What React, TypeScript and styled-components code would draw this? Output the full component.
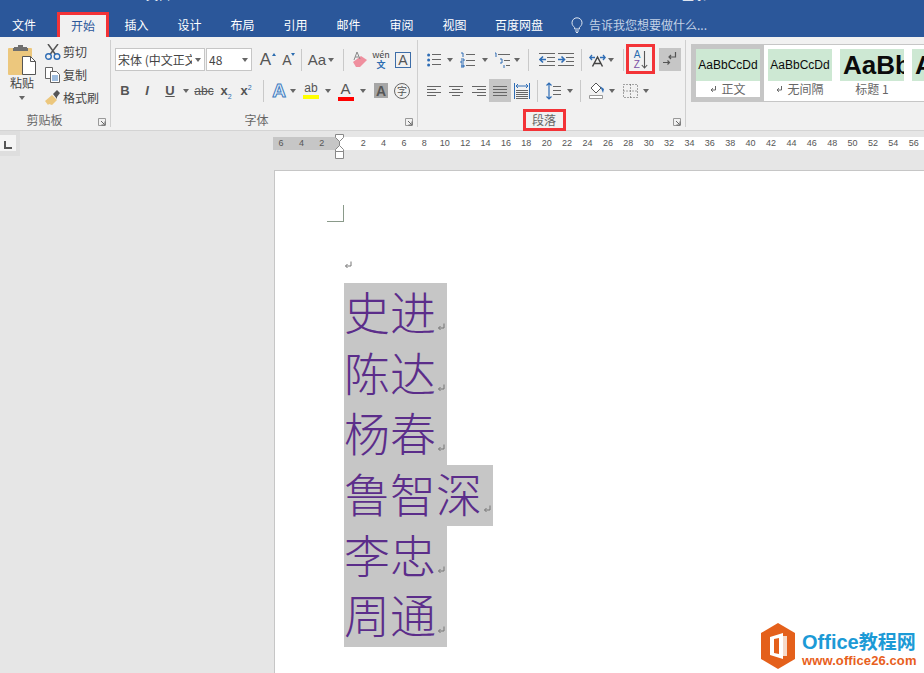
import React from 'react'
import styled, { createGlobalStyle } from 'styled-components'

const Global = createGlobalStyle`
  html, body { margin: 0; padding: 0; background: #e6e6e6; overflow: hidden; }
  * { box-sizing: border-box; }
`

const UI = `"Noto Sans CJK SC", "Liberation Sans", sans-serif`

const Window = styled.div`
  position: relative;
  width: 924px;
  height: 673px;
  overflow: hidden;
  display: flex;
  flex-direction: column;
  font-family: ${UI};
  font-size: 12px;
  color: #444;
`

const TitleBar = styled.div`
  height: 37px;
  flex: none;
  background: #2b579a;
  display: flex;
  flex-direction: column;
`

const TitleSliver = styled.div`
  height: 12px;
  flex: none;
  overflow: hidden;
  display: flex;
  color: #fff;
  font-size: 12px;
  line-height: 12px;
  & > span { margin-top: -11px; height: 12px; }
  & > span:first-child { margin-left: 146px; width: 36px; }
  & > span:last-child { margin-left: 500px; width: 54px; }
`

const Tabs = styled.div`
  height: 25px;
  display: flex;
  align-items: stretch;
`

const Tab = styled.div<{ $active?: boolean; $file?: boolean }>`
  display: flex;
  align-items: center;
  justify-content: center;
  width: ${p => (p.$file ? 57 : p.$active ? 52 : 53)}px;
  padding: ${p => (p.$file ? '0 9px 0 0' : 0)};
  margin-right: ${p => (p.$active ? 1 : 0)}px;
  color: ${p => (p.$active ? '#2b579a' : '#fff')};
  background: ${p => (p.$active ? '#f1f1f1' : 'transparent')};
  border: ${p => (p.$active ? '3px solid #f33337' : 'none')};
  border-bottom: none;
  line-height: 20px;
  white-space: nowrap;
`

const WideTab = styled(Tab)`
  width: 76px;
`

const TellMe = styled.div`
  display: flex;
  align-items: center;
  gap: 6px;
  margin-left: 14px;
  color: #c3d2e6;
`

const Ribbon = styled.div`
  height: 94px;
  flex: none;
  display: flex;
  background: #f1f1f1;
  border-bottom: 1px solid #d4d4d4;
`

const Group = styled.div<{ $w?: number }>`
  position: relative;
  width: ${p => (p.$w ? `${p.$w}px` : 'auto')};
  flex: ${p => (p.$w ? 'none' : '1')};
  display: flex;
  flex-direction: column;
  &::after {
    content: '';
    display: ${p => (p.$w ? 'block' : 'none')};
    position: absolute;
    right: 0;
    top: 3px;
    bottom: 3px;
    width: 1px;
    background: #cfcfcf;
  }
`

const GroupBody = styled.div<{ $left?: number }>`
  flex: 1;
  padding-left: ${p => p.$left ?? 0}px;
  padding-top: 11px;
  display: flex;
  flex-direction: column;
  gap: 8px;
`

const GroupLabel = styled.div<{ $align?: string; $shift?: number }>`
  position: relative;
  height: 20px;
  flex: none;
  display: flex;
  align-items: center;
  justify-content: ${p => p.$align ?? 'center'};
  padding-right: ${p => p.$shift ?? 0}px;
  color: #666;
  line-height: 20px;
`

const Launcher = styled.svg`
  position: absolute;
  right: 5px;
  top: 8px;
  width: 8px;
  height: 8px;
`

const Row = styled.div`
  height: 23px;
  display: flex;
  align-items: center;
`

const S = styled.div<{ $w: number; $on?: boolean }>`
  position: relative;
  width: ${p => p.$w}px;
  height: 23px;
  flex: none;
  display: flex;
  align-items: center;
  justify-content: center;
  background: ${p => (p.$on ? '#c6c6c6' : 'transparent')};
`

const Caret = styled(S)`
  &::before {
    content: '';
    flex: none;
    border-left: 3.5px solid transparent;
    border-right: 3.5px solid transparent;
    border-top: 4px solid #666;
    margin-top: 1px;
  }
`

const Sep = styled(S)`
  &::before {
    content: '';
    width: 1px;
    height: 22px;
    background: #c9c9c9;
  }
`

const Flag = styled.div<{ $t: number; $l: number; $w: number; $h: number }>`
  position: absolute;
  top: ${p => p.$t}px;
  left: ${p => p.$l}px;
  width: ${p => p.$w}px;
  height: ${p => p.$h}px;
  border: 3px solid #f33337;
  pointer-events: none;
`

/* clipboard */
const Clip = styled.div`
  flex: 1;
  display: flex;
`

const PasteCol = styled.div`
  width: 32px;
  margin-left: 6px;
  padding-top: 8px;
  display: flex;
  flex-direction: column;
  align-items: center;
  line-height: 16px;
  font-size: 12px;
`

const PasteCaret = styled(Caret)`
  height: 9px;
  margin-top: 2px;
`

const ClipCol = styled.div`
  margin-left: 7px;
  padding-top: 3px;
  display: flex;
  flex-direction: column;
`

const ClipItem = styled.div`
  height: 23px;
  display: flex;
  align-items: center;
  gap: 2px;
  white-space: nowrap;
`

/* font */
const Combo = styled.div<{ $w: number; $ml?: number }>`
  width: ${p => p.$w}px;
  margin-left: ${p => p.$ml ?? 0}px;
  height: 23px;
  flex: none;
  background: #fff;
  border: 1px solid #c6c6c6;
  display: flex;
  align-items: center;
  padding-left: 2px;
  overflow: hidden;
`

const ComboText = styled.span`
  flex: 1;
  min-width: 0;
  overflow: hidden;
  white-space: nowrap;
  color: #444;
`

const Glyph = styled.span<{ $size?: number; $color?: string; $bold?: boolean; $italic?: boolean }>`
  font-family: "Liberation Sans", sans-serif;
  font-size: ${p => p.$size ?? 13}px;
  line-height: 1;
  color: ${p => p.$color ?? '#555'};
  font-weight: ${p => (p.$bold ? 700 : 400)};
  font-style: ${p => (p.$italic ? 'italic' : 'normal')};
  white-space: nowrap;
  & sub, & sup { font-size: 7px; color: #2b6cb0; line-height: 0; font-weight: 400; }
`

const Strike = styled(Glyph)`
  text-decoration: line-through;
`

const Under = styled(Glyph)`
  text-decoration: underline;
`

const Nudge = styled.i<{ $color?: string; $down?: boolean; $right?: number }>`
  position: absolute;
  top: 5px;
  right: ${p => p.$right ?? 1}px;
  border-left: 2.5px solid transparent;
  border-right: 2.5px solid transparent;
  ${p => (p.$down ? `border-top: 3px solid ${p.$color};` : `border-bottom: 3px solid ${p.$color};`)}
`

const OutlineA = styled(Glyph)`
  color: #e6f0fa;
  -webkit-text-stroke: 1px #3f7cc0;
`

const BarGlyph = styled.div`
  display: flex;
  flex-direction: column;
  align-items: center;
  line-height: 1;
`

const ColorBar = styled.div<{ $color: string }>`
  width: 16px;
  height: 4px;
  background: ${p => p.$color};
  margin-top: 1px;
`

const BoxA = styled.div`
  width: 16px;
  height: 16px;
  border: 1px solid #3d6da8;
  display: flex;
  align-items: center;
  justify-content: center;
`

const ShadeA = styled.div`
  width: 14px;
  height: 15px;
  background: #a6a6a6;
  display: flex;
  align-items: center;
  justify-content: center;
`

const Circled = styled.div`
  width: 16px;
  height: 16px;
  flex: none;
  border: 1px solid #666;
  border-radius: 50%;
  font-size: 10px;
  line-height: 14px;
  text-align: center;
  color: #555;
`

const Wen = styled.div`
  display: flex;
  flex-direction: column;
  align-items: center;
  line-height: 10px;
  font-size: 9px;
  color: #444;
  & b { color: #2b6cb0; font-size: 9px; font-weight: 700; }
`

/* paragraph */
const SortLetters = styled.div`
  display: flex;
  flex-direction: column;
  line-height: 10px;
  font-family: "Liberation Sans", sans-serif;
  font-size: 10px;
  & span:first-child { color: #2b6cb0; }
  & span:last-child { color: #7b4fa6; }
`

const SortIcon = styled.div`
  display: flex;
  align-items: center;
  gap: 1px;
`

/* styles */
const StylesBody = styled.div`
  flex: 1;
  padding: 7px 0 0 5px;
`

const Gallery = styled.div`
  height: 58px;
  display: flex;
  background: #fff;
  border: 1px solid #c6c6c6;
  border-right: none;
  overflow: hidden;
`

const StyleItem = styled.div<{ $on?: boolean }>`
  width: 72px;
  height: 56px;
  flex: none;
  border: 4px solid ${p => (p.$on ? '#c6c6c6' : 'transparent')};
  display: flex;
  flex-direction: column;
`

const Swatch = styled.div<{ $big?: boolean }>`
  height: 32px;
  flex: none;
  background: #cde8d3;
  color: #0b0b0b;
  font-family: "Liberation Sans", sans-serif;
  font-size: ${p => (p.$big ? 26 : 12)}px;
  font-weight: ${p => (p.$big ? 700 : 400)};
  line-height: 32px;
  text-align: ${p => (p.$big ? 'left' : 'center')};
  padding-left: ${p => (p.$big ? 3 : 0)}px;
  overflow: hidden;
  white-space: nowrap;
`

const StyleName = styled.div`
  height: 16px;
  display: flex;
  align-items: center;
  justify-content: center;
  gap: 4px;
  color: #666;
  line-height: 16px;
  white-space: nowrap;
`

/* workspace */
const Workspace = styled.div`
  flex: 1;
  background: #e6e6e6;
  display: flex;
  flex-direction: column;
  min-height: 0;
`

const RulerRow = styled.div`
  height: 39px;
  flex: none;
  display: flex;
`

const Corner = styled.div`
  width: 20px;
  height: 25px;
  flex: none;
  background: #dedede;
  padding: 4px 4px 5px 0;
`

const CornerInner = styled.div`
  height: 100%;
  background: #f4f4f4;
  display: flex;
  align-items: center;
  justify-content: center;
  &::before {
    content: '';
    width: 6px;
    height: 6px;
    margin-top: 3px;
    border-left: 2px solid #555;
    border-bottom: 2px solid #555;
  }
`

const Ruler = styled.div`
  position: relative;
  margin: 6px 0 0 253px;
  height: 13px;
  flex: 1;
  display: flex;
  font-family: "Liberation Sans", sans-serif;
  font-size: 9px;
  color: #555;
`

const RulerGrey = styled.div`
  width: 67px;
  flex: none;
  background: #c6c6c6;
  display: flex;
  justify-content: flex-end;
  padding-right: 8px;
`

const RulerWhite = styled.div`
  flex: 1;
  background: #fff;
  display: flex;
  padding-left: 13px;
  overflow: hidden;
`

const Tick = styled.span`
  width: 20.4px;
  flex: none;
  text-align: center;
  line-height: 13px;
`

const Indent = styled.svg`
  position: absolute;
  left: 61px;
  top: -3px;
  width: 11px;
  height: 25px;
`

const Page = styled.div`
  flex: 1;
  margin-left: 274px;
  background: #fff;
  border-left: 1px solid #c6c6c6;
  border-top: 1px solid #c6c6c6;
  padding: 34px 0 0 69px;
  min-height: 0;
`

const CropMark = styled.div`
  width: 17px;
  height: 17px;
  margin-left: -17px;
  border-right: 1px solid #8a9a8a;
  border-bottom: 1px solid #8a9a8a;
`

const EmptyLine = styled.div`
  height: 61px;
  padding-top: 38px;
  line-height: 0;
`

const DocLine = styled.div`
  height: 60.7px;
  display: flex;
  align-items: flex-start;
  width: fit-content;
  background: #c6c6c6;
  color: #5b2d8a;
  font-family: "Noto Sans CJK SC", sans-serif;
  font-size: 46px;
  font-weight: 300;
  line-height: 55px;
  white-space: nowrap;
  padding-right: 1px;
`

const LineMark = styled.svg`
  width: 9px;
  height: 9px;
  flex: none;
`

const DocMark = styled(LineMark)`
  margin-top: 39px;
  margin-left: 1px;
`

const Mark = styled.svg`
  width: 7px;
  height: 8px;
`

const Watermark = styled.div`
  position: absolute;
  left: 760px;
  top: 623px;
  display: flex;
  gap: 6px;
  align-items: center;
`

const WatermarkText = styled.div`
  display: flex;
  flex-direction: column;
  font-weight: 700;
  white-space: nowrap;
`

const WatermarkTop = styled.div`
  font-size: 20px;
  line-height: 23px;
  color: #1c9ad6;
  margin-top: 3px;
  font-family: "Liberation Sans", "Noto Sans CJK SC", sans-serif;
  & span { font-size: 19px; font-family: "Noto Sans CJK SC", sans-serif; }
`

const WatermarkBottom = styled.div`
  font-size: 13px;
  line-height: 13px;
  letter-spacing: 0.1px;
  color: #e8601c;
  font-family: "Liberation Sans", sans-serif;
`

const LaunchIcon = () => (
  <Launcher viewBox="0 0 8 8">
    <path d="M.5 7.500V.5h7v7z" fill="none" stroke="#999" />
    <path d="M3 3l3.500 3.500M7 3.500V7H3.500" fill="none" stroke="#666" />
  </Launcher>
)

const Return = () => (
  <Mark viewBox="0 0 7 8">
    <path d="M5.500 1v4H1.200M3 3.200L1 5l2 1.800" fill="none" stroke="#666" />
  </Mark>
)

const LineReturn = () => (
  <LineMark viewBox="0 0 9 9">
    <path d="M7 1.500v4.500H1.500M3.500 4L1.500 6l2 2" fill="none" stroke="#777" />
  </LineMark>
)

const DocReturn = () => (
  <DocMark viewBox="0 0 9 9">
    <path d="M7 1.500v4.500H1.500M3.500 4L1.500 6l2 2" fill="none" stroke="#777" />
  </DocMark>
)

const Paste = () => (
  <svg width="28" height="30" viewBox="0 0 28 30">
    <rect x="0" y="3" width="24" height="27" rx="1" fill="#ecc77d" />
    <path d="M6 3V2h4V0h5v2h4v1h1v3H5V3z" fill="#6f6f6f" />
    <path d="M14.500 11.500h8l5 5v13h-13z" fill="#fff" stroke="#555" />
    <path d="M22.500 11.500v5h5" fill="none" stroke="#555" />
  </svg>
)

const Scissors = () => (
  <svg width="16" height="16" viewBox="0 0 16 16">
    <path d="M3 0l7.500 10.500M13 0L5 10.500" stroke="#555" strokeWidth="1.500" fill="none" />
    <circle cx="3.500" cy="12.500" r="2.800" fill="none" stroke="#2f6db5" strokeWidth="1.400" />
    <circle cx="12" cy="12.500" r="2.800" fill="none" stroke="#2f6db5" strokeWidth="1.400" />
  </svg>
)

const Copy = () => (
  <svg width="16" height="16" viewBox="0 0 16 16">
    <path d="M.5.5h7v11h-7z" fill="#fff" stroke="#666" />
    <path d="M5.500 4.500h6l3 3v8h-9z" fill="#fff" stroke="#666" />
    <path d="M7 9h6M7 11h6M7 13h6" stroke="#3f7cc0" />
  </svg>
)

const Brush = () => (
  <svg width="16" height="16" viewBox="0 0 16 16">
    <path d="M0 11l7-6 5 5-5 5-3-1-1 1z" fill="#ecc77d" />
    <path d="M8 4l4-4 3 3-3 4 0 2z" fill="#555" />
  </svg>
)

const Eraser = () => (
  <svg width="16" height="17" viewBox="0 0 16 17">
    <path d="M1 11l8-6 6 4-7 7H4z" fill="#ef8f9e" />
    <path d="M2 9l3-8 3 7M3.200 6h3.600" fill="none" stroke="#888" />
  </svg>
)

const lines = (ys: [number, number, number][], color = '#666') =>
  ys.map(([y, a, b]) => <path key={`${y}-${a}`} d={`M${a} ${y}.5H${b}`} stroke={color} />)

const Align = ({ kind }: { kind: 'l' | 'c' | 'r' | 'j' }) => {
  const short =
    kind === 'l' ? [0, 9] : kind === 'c' ? [3, 11] : kind === 'r' ? [5, 14] : [0, 14]
  return (
    <svg width="14" height="12" viewBox="0 0 14 12">
      {lines([
        [1, 0, 14],
        [4, short[0], short[1]],
        [7, 0, 14],
        [10, short[0], short[1]],
      ])}
    </svg>
  )
}

const Distribute = () => (
  <svg width="16" height="16" viewBox="0 0 16 16">
    <path d="M.5 0v16M15.500 0v16" stroke="#2f6db5" />
    <path d="M2 3h12M4 1L2 3l2 2M12 1l2 2-2 2" fill="none" stroke="#2f6db5" />
    {lines([[7, 2, 14], [9, 2, 14], [11, 2, 14], [13, 2, 14], [15, 2, 14]])}
  </svg>
)

const Bullets = () => (
  <svg width="14" height="14" viewBox="0 0 14 14">
    <circle cx="1.600" cy="2" r="1.500" fill="#2f6db5" />
    <circle cx="1.600" cy="7" r="1.500" fill="#2f6db5" />
    <circle cx="1.600" cy="12" r="1.500" fill="#2f6db5" />
    {lines([[1, 5, 14], [6, 5, 14], [11, 5, 14]])}
  </svg>
)

const Numbers = () => (
  <svg width="16" height="16" viewBox="0 0 16 16">
    <path d="M1 1h2v4M1 7h3v2H1v2h3M1 13h3v2H1M1 14h3" fill="none" stroke="#2f6db5" />
    {lines([[2, 6, 15], [8, 6, 15], [13, 6, 15]])}
  </svg>
)

const MultiLevel = () => (
  <svg width="16" height="16" viewBox="0 0 16 16">
    <path d="M1 1h1v4M6 7h2v4H6M10 13v3" fill="none" stroke="#2f6db5" />
    {lines([[2, 4, 16], [8, 10, 16], [13, 12, 16]])}
  </svg>
)

const Outdent = ({ flip }: { flip?: boolean }) => (
  <svg width="16" height="13" viewBox="0 0 16 13">
    {lines([[0, 0, 16], [4, 8, 16], [8, 8, 16], [12, 0, 16]])}
    <path
      d={flip ? 'M0 6.500h6M3.500 3.500l3 3-3 3' : 'M1 6.500h6M4 3.500l-3 3 3 3'}
      fill="none"
      stroke="#2f6db5"
      strokeWidth="1.600"
    />
  </svg>
)

const TextDir = () => (
  <svg width="17" height="14" viewBox="0 0 17 14">
    <path d="M1 4.500h5M3 2L.8 4.500 3 7M11 4.500h5M14 2l2.200 2.500L14 7" fill="none" stroke="#2f6db5" strokeWidth="1.300" />
    <path d="M3.500 13.500L8.500 4l5 9.500M5.500 10.500h6" fill="none" stroke="#444" strokeWidth="1.500" />
  </svg>
)

const Pilcrow = () => (
  <svg width="14" height="15" viewBox="0 0 14 15">
    <path d="M12.500 0v5H6M8 3L6 5l2 2" fill="none" stroke="#555" strokeWidth="1.200" />
    <path d="M0 10.500h6.500M4.500 8.500l2 2-2 2" fill="none" stroke="#555" strokeWidth="1.200" />
  </svg>
)

const SortArrow = () => (
  <svg width="7" height="18" viewBox="0 0 7 18">
    <path d="M3.500 0v17M.8 14l2.700 3 2.700-3" fill="none" stroke="#555" strokeWidth="1.100" />
  </svg>
)

const LineSpacing = () => (
  <svg width="15" height="18" viewBox="0 0 15 18">
    <path d="M3 1v16M.5 3.500L3 1l2.500 2.500M.5 14.500L3 17l2.500-2.500" fill="none" stroke="#2f6db5" strokeWidth="1.200" />
    {lines([[4, 7, 15], [8, 7, 15], [12, 7, 15]])}
  </svg>
)

const Shading = () => (
  <svg width="16" height="17" viewBox="0 0 16 17">
    <path d="M7 1l5 5-5 5-5-5z" fill="#fff" stroke="#555" />
    <path d="M11 4l4 3-1 4z" fill="#2f6db5" />
    <path d="M.5 13.500h13v3H.5z" fill="#fff" stroke="#999" />
  </svg>
)

const Borders = () => (
  <svg width="15" height="14" viewBox="0 0 15 14">
    <path d="M.5.5h14v13H.5zM7.500.5v13M.5 7h14" fill="none" stroke="#555" strokeDasharray="1 2" />
  </svg>
)

const Bulb = () => (
  <svg width="12" height="16" viewBox="0 0 12 16">
    <path
      d="M3.600 10.500C2.500 9.300 1 8.200 1 5.800a5 5 0 0 1 10 0c0 2.400-1.500 3.500-2.600 4.700v1.500H3.600zM4 14h4M5 15.500h2"
      fill="none"
      stroke="#dfe7f2"
    />
  </svg>
)

const Logo = () => (
  <svg width="36" height="46" viewBox="0 0 36 46">
    <path d="M18 0l17 10v26L18 46 1 36V10z" fill="#e4601b" />
    <path d="M10 14l13-4v26l-13-4z" fill="#fff" />
    <path d="M14 16l5-1v16l-5-1z" fill="#e4601b" />
    <path d="M23 13h4v20h-4z" fill="#f6d9c8" />
  </svg>
)

const RULER_LEFT = [6, 4, 2]
const RULER_RIGHT = Array.from({ length: 29 }, (_, i) => (i + 1) * 2)
const NAMES = ['史进', '陈达', '杨春', '鲁智深', '李忠', '周通']

export default function App() {
  return (
    <Window>
      <Global />
      <TitleBar>
        <TitleSliver>
          <span>文档</span>
          <span>登录</span>
        </TitleSliver>
        <Tabs>
          <Tab $file>文件</Tab>
          <Tab $active>开始</Tab>
          <Tab>插入</Tab>
          <Tab>设计</Tab>
          <Tab>布局</Tab>
          <Tab>引用</Tab>
          <Tab>邮件</Tab>
          <Tab>审阅</Tab>
          <Tab>视图</Tab>
          <WideTab>百度网盘</WideTab>
          <TellMe>
            <Bulb />
            告诉我您想要做什么...
          </TellMe>
        </Tabs>
      </TitleBar>

      <Ribbon>
        <Group $w={111}>
          <Clip>
            <PasteCol>
              <Paste />
              粘贴
              <PasteCaret $w={10} />
            </PasteCol>
            <ClipCol>
              <ClipItem>
                <Scissors />
                剪切
              </ClipItem>
              <ClipItem>
                <Copy />
                复制
              </ClipItem>
              <ClipItem>
                <Brush />
                格式刷
              </ClipItem>
            </ClipCol>
          </Clip>
          <GroupLabel $shift={22}>
            剪贴板
            <LaunchIcon />
          </GroupLabel>
        </Group>

        <Group $w={307}>
          <GroupBody $left={4}>
            <Row>
              <Combo $w={90}>
                <ComboText>宋体 (中文正文</ComboText>
                <Caret $w={12} />
              </Combo>
              <Combo $w={46} $ml={1}>
                <ComboText>48</ComboText>
                <Caret $w={12} />
              </Combo>
              <S $w={27}>
                <Glyph $size={17}>A</Glyph>
                <Nudge $color="#2b6cb0" $right={3} />
              </S>
              <S $w={16}>
                <Glyph $size={14}>A</Glyph>
                <Nudge $color="#2b6cb0" $down $right={0} />
              </S>
              <Sep $w={12} />
              <S $w={20}>
                <Glyph $size={15}>Aa</Glyph>
              </S>
              <Caret $w={8} />
              <Sep $w={16} />
              <S $w={18}>
                <Eraser />
              </S>
              <S $w={24}>
                <Wen>
                  wén
                  <b>文</b>
                </Wen>
              </S>
              <S $w={20}>
                <BoxA>
                  <Glyph $size={14}>A</Glyph>
                </BoxA>
              </S>
            </Row>
            <Row>
              <S $w={20}>
                <Glyph $bold>B</Glyph>
              </S>
              <S $w={24}>
                <Glyph $italic $bold>I</Glyph>
              </S>
              <S $w={22}>
                <Under $bold>U</Under>
              </S>
              <Caret $w={10} />
              <S $w={26}>
                <Strike $size={12}>abc</Strike>
              </S>
              <S $w={18}>
                <Glyph $bold>
                  x<sub>2</sub>
                </Glyph>
              </S>
              <S $w={22}>
                <Glyph $bold>
                  x<sup>2</sup>
                </Glyph>
              </S>
              <Sep $w={12} />
              <S $w={20}>
                <OutlineA $size={19} $bold>
                  A
                </OutlineA>
              </S>
              <Caret $w={8} />
              <S $w={28}>
                <BarGlyph>
                  <Glyph $size={12}>ab</Glyph>
                  <ColorBar $color="#ffff00" />
                </BarGlyph>
              </S>
              <Caret $w={6} />
              <S $w={29}>
                <BarGlyph>
                  <Glyph $size={15}>A</Glyph>
                  <ColorBar $color="#ff0000" />
                </BarGlyph>
              </S>
              <Caret $w={5} />
              <S $w={32}>
                <ShadeA>
                  <Glyph $size={14} $bold>
                    A
                  </Glyph>
                </ShadeA>
              </S>
              <S $w={10}>
                <Circled>字</Circled>
              </S>
            </Row>
          </GroupBody>
          <GroupLabel $shift={16}>
            字体
            <LaunchIcon />
          </GroupLabel>
        </Group>

        <Group $w={268}>
          <GroupBody $left={6}>
            <Row>
              <S $w={20}>
                <Bullets />
              </S>
              <Caret $w={12} />
              <S $w={23}>
                <Numbers />
              </S>
              <Caret $w={11} />
              <S $w={23}>
                <MultiLevel />
              </S>
              <Caret $w={7} />
              <Sep $w={16} />
              <S $w={22}>
                <Outdent />
              </S>
              <S $w={16}>
                <Outdent flip />
              </S>
              <Sep $w={14} />
              <S $w={19}>
                <TextDir />
              </S>
              <Caret $w={8} />
              <Sep $w={16} />
              <S $w={20}>
                <SortIcon>
                  <SortLetters>
                    <span>A</span>
                    <span>Z</span>
                  </SortLetters>
                  <SortArrow />
                </SortIcon>
                <Flag $t={-4} $l={-5} $w={29} $h={30} />
              </S>
              <S $w={8} />
              <S $w={22} $on>
                <Pilcrow />
              </S>
            </Row>
            <Row>
              <S $w={20}>
                <Align kind="l" />
              </S>
              <S $w={24}>
                <Align kind="c" />
              </S>
              <S $w={21}>
                <Align kind="r" />
              </S>
              <S $w={22} $on>
                <Align kind="j" />
              </S>
              <S $w={22}>
                <Distribute />
              </S>
              <Sep $w={8} />
              <S $w={25}>
                <LineSpacing />
              </S>
              <Caret $w={7} />
              <Sep $w={15} />
              <S $w={17}>
                <Shading />
              </S>
              <Caret $w={14} />
              <S $w={23}>
                <Borders />
              </S>
              <Caret $w={8} />
            </Row>
          </GroupBody>
          <GroupLabel $shift={16}>
            段落
            <Flag $t={-1} $l={105} $w={43} $h={22} />
            <LaunchIcon />
          </GroupLabel>
        </Group>

        <Group>
          <StylesBody>
            <Gallery>
              <StyleItem $on>
                <Swatch>AaBbCcDd</Swatch>
                <StyleName>
                  <Return />
                  正文
                </StyleName>
              </StyleItem>
              <StyleItem>
                <Swatch>AaBbCcDd</Swatch>
                <StyleName>
                  <Return />
                  无间隔
                </StyleName>
              </StyleItem>
              <StyleItem>
                <Swatch $big>AaBb</Swatch>
                <StyleName>标题 1</StyleName>
              </StyleItem>
              <StyleItem>
                <Swatch $big>A</Swatch>
              </StyleItem>
            </Gallery>
          </StylesBody>
          <GroupLabel $align="flex-end">样式&nbsp;</GroupLabel>
        </Group>
      </Ribbon>

      <Workspace>
        <RulerRow>
          <Corner>
            <CornerInner />
          </Corner>
          <Ruler>
            <RulerGrey>
              {RULER_LEFT.map(n => (
                <Tick key={n}>{n}</Tick>
              ))}
            </RulerGrey>
            <RulerWhite>
              {RULER_RIGHT.map(n => (
                <Tick key={n}>{n}</Tick>
              ))}
            </RulerWhite>
            <Indent viewBox="0 0 11 25">
              <path d="M1.500.5h8v3l-4 4-4-4zM1.500 15.500l4-4 4 4v2h-8zM1.500 17.500h8v7h-8z" fill="#fff" stroke="#888" />
              <path d="M5.500 7.500v4" stroke="#888" />
            </Indent>
          </Ruler>
        </RulerRow>
        <Page>
          <CropMark />
          <EmptyLine>
            <LineReturn />
          </EmptyLine>
          {NAMES.map(name => (
            <DocLine key={name}>
              {name}
              <DocReturn />
            </DocLine>
          ))}
        </Page>
      </Workspace>

      <Watermark>
        <Logo />
        <WatermarkText>
          <WatermarkTop>
            Office<span>教程网</span>
          </WatermarkTop>
          <WatermarkBottom>www.office26.com</WatermarkBottom>
        </WatermarkText>
      </Watermark>
    </Window>
  )
}
